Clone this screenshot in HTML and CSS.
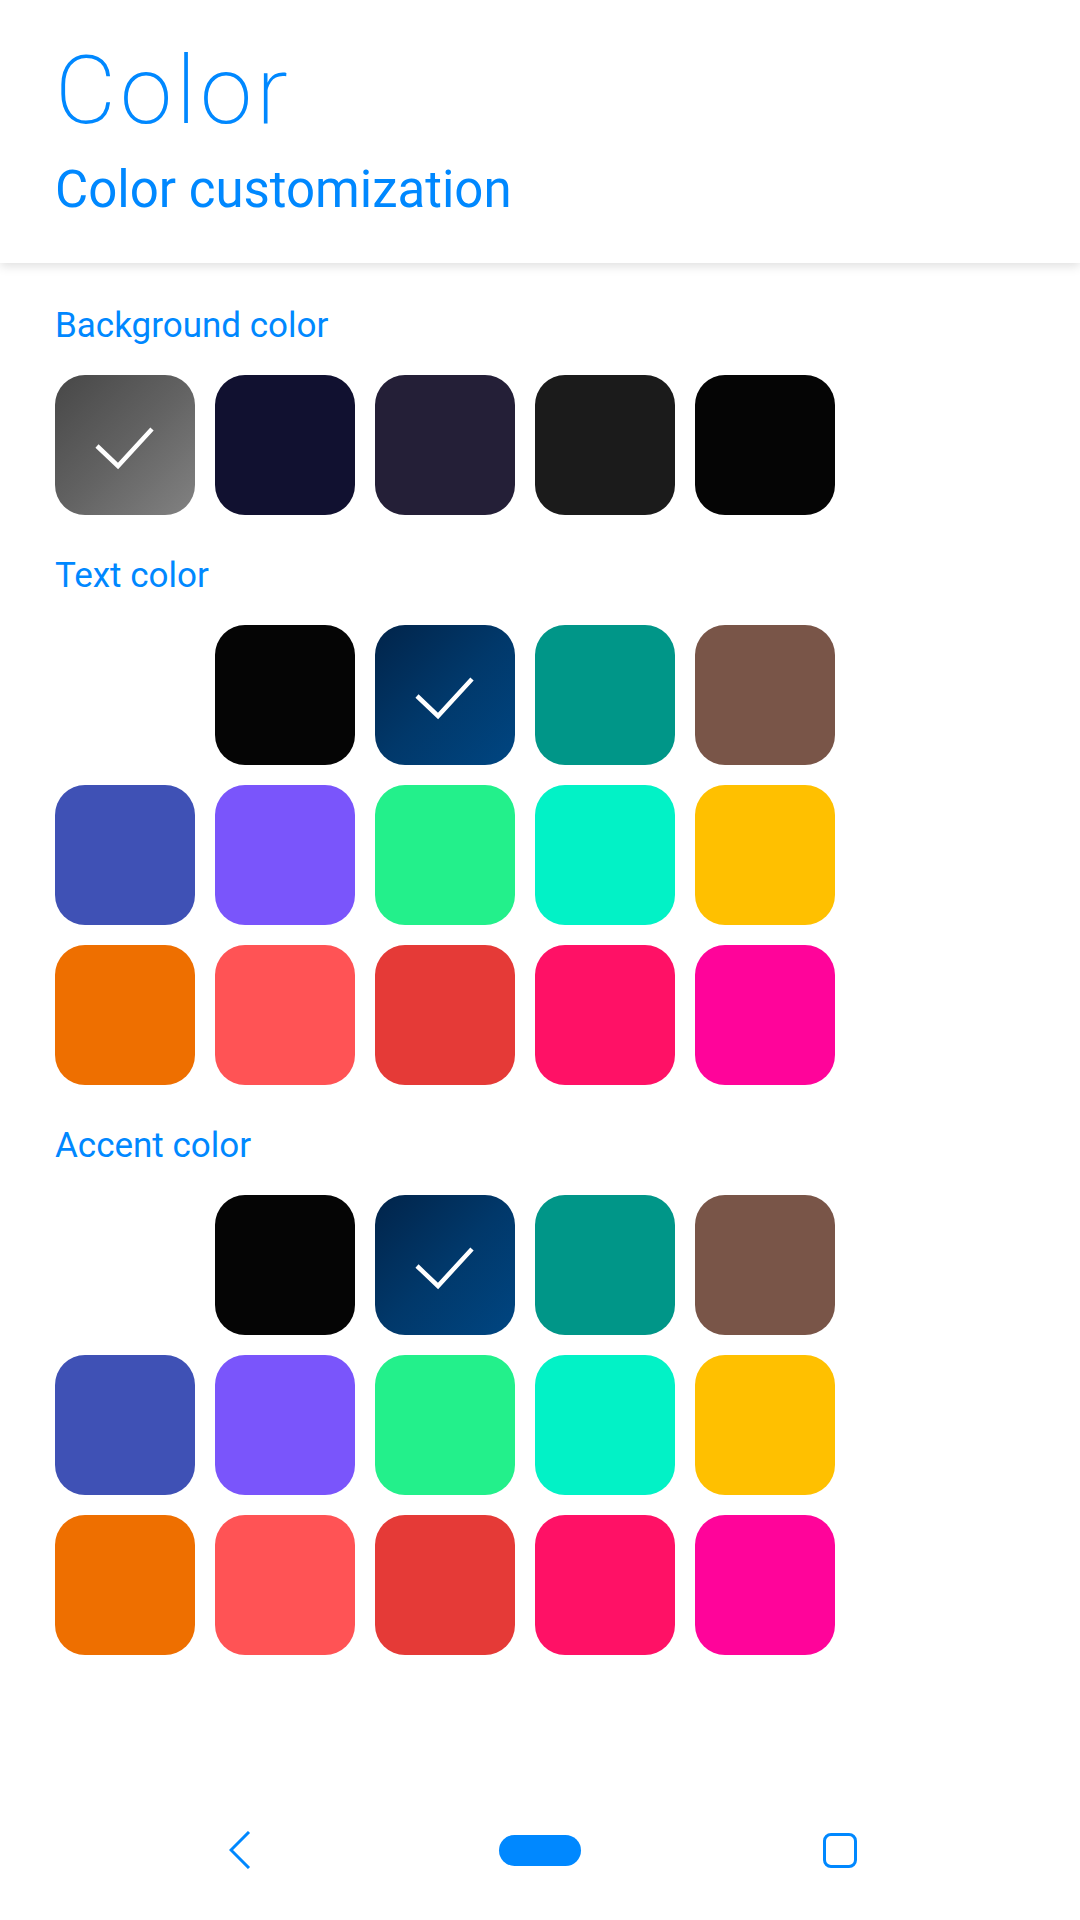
FILE: index.html
```html
<!DOCTYPE html>
<html lang="en">
<head>
<meta charset="utf-8">
<title>Color</title>
<link rel="stylesheet" href="styles.css">
</head>
<body>
<div class="page">
  <header class="header">
    <h1 class="title">Color</h1>
    <h2 class="subtitle">Color customization</h2>
  </header>

  <main class="content">
    <section class="section">
      <div class="label">Background color</div>
      <div class="grid">
        <div class="swatch sel-gray"><svg viewBox="0 0 140 140"><polyline points="42,71 63,91 97,54"/></svg></div>
        <div class="swatch c-navy"></div>
        <div class="swatch c-plum"></div>
        <div class="swatch c-char"></div>
        <div class="swatch c-black"></div>
      </div>
    </section>

    <section class="section">
      <div class="label">Text color</div>
      <div class="grid">
        <div class="swatch c-white"></div>
        <div class="swatch c-black"></div>
        <div class="swatch sel-blue"><svg viewBox="0 0 140 140"><polyline points="42,71 63,91 97,54"/></svg></div>
        <div class="swatch c-teal"></div>
        <div class="swatch c-brown"></div>
        <div class="swatch c-indigo"></div>
        <div class="swatch c-purple"></div>
        <div class="swatch c-green"></div>
        <div class="swatch c-aqua"></div>
        <div class="swatch c-amber"></div>
        <div class="swatch c-orange"></div>
        <div class="swatch c-salmon"></div>
        <div class="swatch c-red"></div>
        <div class="swatch c-pink"></div>
        <div class="swatch c-magenta"></div>
      </div>
    </section>

    <section class="section">
      <div class="label">Accent color</div>
      <div class="grid">
        <div class="swatch c-white"></div>
        <div class="swatch c-black"></div>
        <div class="swatch sel-blue"><svg viewBox="0 0 140 140"><polyline points="42,71 63,91 97,54"/></svg></div>
        <div class="swatch c-teal"></div>
        <div class="swatch c-brown"></div>
        <div class="swatch c-indigo"></div>
        <div class="swatch c-purple"></div>
        <div class="swatch c-green"></div>
        <div class="swatch c-aqua"></div>
        <div class="swatch c-amber"></div>
        <div class="swatch c-orange"></div>
        <div class="swatch c-salmon"></div>
        <div class="swatch c-red"></div>
        <div class="swatch c-pink"></div>
        <div class="swatch c-magenta"></div>
      </div>
    </section>
  </main>

  <nav class="navbar">
    <div class="nav-item">
      <svg class="nav-back" viewBox="0 0 22 38"><polyline points="20,1 2,19 20,37"/></svg>
    </div>
    <div class="nav-item"><div class="nav-home"></div></div>
    <div class="nav-item"><div class="nav-recent"></div></div>
  </nav>
</div>
</body>
</html>
```

FILE: styles.css
```css
* { box-sizing: border-box; }

html, body {
  margin: 0;
  padding: 0;
  background: #ffffff;
}

body {
  font-family: Roboto, "Liberation Sans", sans-serif;
  color: #0088ff;
}

.page {
  width: 1080px;
  min-height: 1920px;
  display: flex;
  flex-direction: column;
}

.header {
  background: #ffffff;
  padding: 44px 55px 48px 55px;
  box-shadow: 0 3px 10px rgba(0, 0, 0, 0.13);
  position: relative;
  z-index: 1;
}

.title {
  margin: 0;
  font-size: 94px;
  line-height: 94px;
  font-weight: 200;
  letter-spacing: 4px;
  color: #0088ff;
}

.subtitle {
  margin: 27px 0 0 0;
  font-size: 51px;
  line-height: 50px;
  font-weight: 400;
  color: #0088ff;
}

.content {
  flex: 1;
  padding: 46px 0 0 55px;
  display: flex;
  flex-direction: column;
  gap: 44px;
}

.label {
  font-size: 35px;
  line-height: 33px;
  margin-bottom: 33px;
  color: #0088ff;
}

.grid {
  display: grid;
  grid-template-columns: repeat(5, 140px);
  grid-auto-rows: 140px;
  gap: 20px;
}

.swatch {
  width: 140px;
  height: 140px;
  border-radius: 30px;
  display: flex;
}

.swatch svg {
  width: 140px;
  height: 140px;
}

.swatch polyline {
  fill: none;
  stroke: #ffffff;
  stroke-width: 4.5;
}

.sel-gray { background: linear-gradient(135deg, #474747 0%, #626262 50%, #828282 100%); }
.sel-blue { background: linear-gradient(135deg, #01244a 0%, #01386a 50%, #004682 100%); }

.c-white { background: #ffffff; }
.c-navy { background: #111130; }
.c-plum { background: #241f37; }
.c-char { background: #1b1b1b; }
.c-black { background: #050505; }
.c-teal { background: #009688; }
.c-brown { background: #795548; }
.c-indigo { background: #3f51b5; }
.c-purple { background: #7a55fb; }
.c-green { background: #23f08b; }
.c-aqua { background: #02f2c6; }
.c-amber { background: #ffc000; }
.c-orange { background: #ee6f00; }
.c-salmon { background: #ff5355; }
.c-red { background: #e53a37; }
.c-pink { background: #ff1166; }
.c-magenta { background: #ff049a; }

.navbar {
  height: 140px;
  display: flex;
  justify-content: center;
  align-items: center;
}

.nav-item {
  width: 300px;
  height: 40px;
  display: flex;
  justify-content: center;
  align-items: center;
}

.nav-back {
  width: 22px;
  height: 38px;
}

.nav-back polyline {
  fill: none;
  stroke: #0088ff;
  stroke-width: 3;
}

.nav-home {
  width: 82px;
  height: 31px;
  border-radius: 16px;
  background: #0088ff;
}

.nav-recent {
  width: 34px;
  height: 35px;
  border: 3px solid #0088ff;
  border-radius: 8px;
}
```
